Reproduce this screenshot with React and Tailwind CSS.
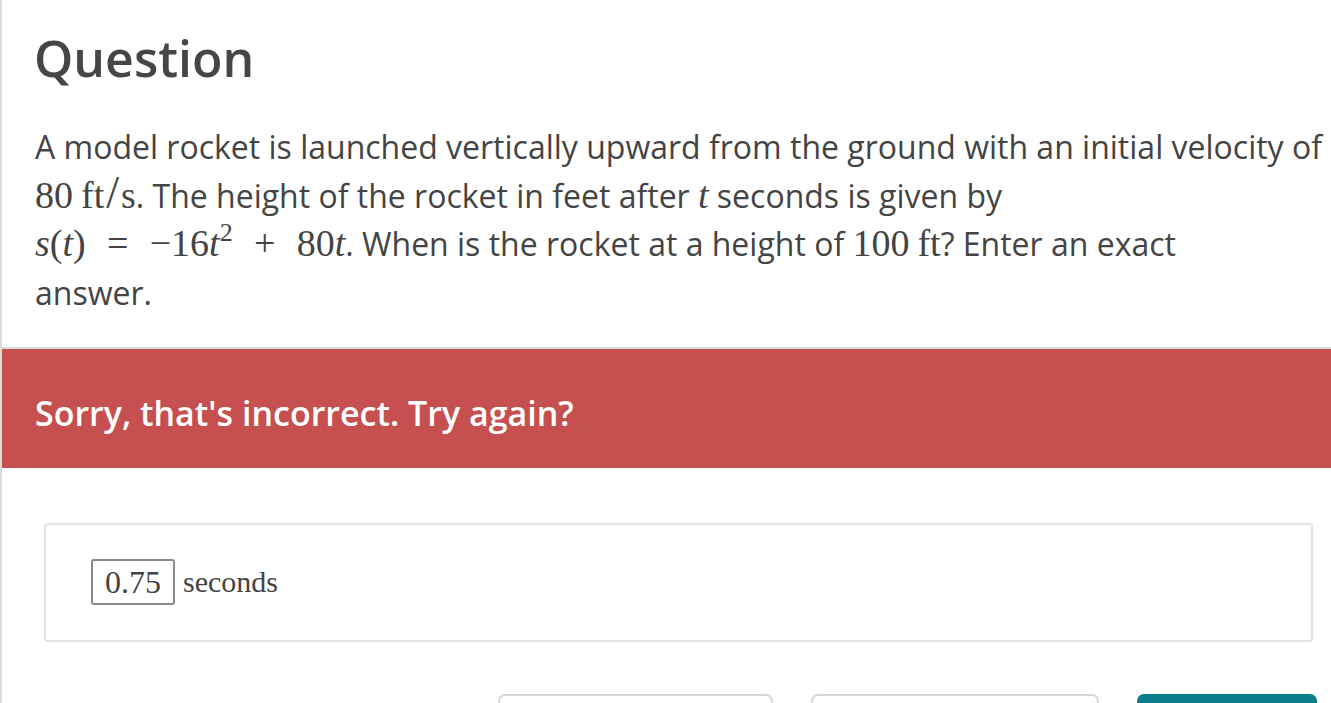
import React from "react";

const sans = { fontFamily: "'Open Sans', 'Noto Sans', sans-serif" };
const serif = { fontFamily: "'Liberation Serif', 'DejaVu Serif', serif" };

function M({ children, italic, className = "" }) {
  return (
    <span className={`text-[38px] leading-none ${italic ? "italic" : ""} ${className}`} style={serif}>
      {children}
    </span>
  );
}

function Op({ children }) {
  return (
    <span className="text-[38px] leading-none inline-block w-[30px] text-center mx-[17px]" style={serif}>
      {children}
    </span>
  );
}

export default function App() {
  return (
    <div className="w-[1331px] h-[703px] overflow-hidden bg-white border-l-2 border-[#dcdcdc] text-[#444]" style={sans}>
      <div className="px-[33px] pt-[25px]">
        <h1 className="text-[50px] font-semibold leading-[66px] text-[#464646] -ml-[1px]">Question</h1>
        <p className="mt-[32px] text-[32px] leading-[48.5px] whitespace-nowrap">
          A model rocket is launched vertically upward from the ground with an initial velocity of
          <br />
          <M>80</M>
          <M className="ml-[8px]">ft</M>
          <span className="text-[46px] leading-[0px] mx-[2px]" style={serif}>/</span>
          <M>s</M>. The height of the rocket in feet after <M italic>t</M> seconds is given by
          <br />
          <M italic>s</M><M>(</M><M italic>t</M><M>)</M>
          <Op>=</Op>
          <M>−16</M><M italic>t</M>
          <span className="text-[26px] leading-none relative top-[-15px]" style={serif}>2</span>
          <Op>+</Op>
          <M>80</M><M italic>t</M>. When is the rocket at a height of <M>100</M><M className="ml-[8px]">ft</M>? Enter an exact
          <br />
          answer.
        </p>
      </div>

      <div className="mt-[30px] border-t-2 border-[#dcdcdc]">
        <div className="bg-[#c64f50] h-[119px] flex items-center px-[33px]">
          <span className="text-white text-[34px] font-semibold mt-[10px]">
            Sorry, that's incorrect. Try again?
          </span>
        </div>
      </div>

      <div className="px-[42px] pt-[55px]">
        <div className="w-[1269px] h-[119px] border-2 border-[#e3e3e3] rounded-[4px] flex items-center pl-[45px]">
          <div className="flex items-center gap-[8px] text-[#444] mb-[2px]" style={serif}>
            <div className="border-2 border-[#8a8a8a] rounded-[3px] h-[46px] w-[84px] flex items-center justify-center text-[32px] leading-none">
              0.75
            </div>
            <span className="text-[30px] leading-none">seconds</span>
          </div>
        </div>
      </div>

      <div className="flex justify-end gap-[38px] pr-[14px] mt-[52px]">
        <div className="w-[275px] h-[40px] border-2 border-[#d6d6d6] rounded-[7px]" />
        <div className="w-[288px] h-[40px] border-2 border-[#d6d6d6] rounded-[7px]" />
        <div className="w-[180px] h-[40px] bg-[#097d89] rounded-[7px]" />
      </div>
    </div>
  );
}
